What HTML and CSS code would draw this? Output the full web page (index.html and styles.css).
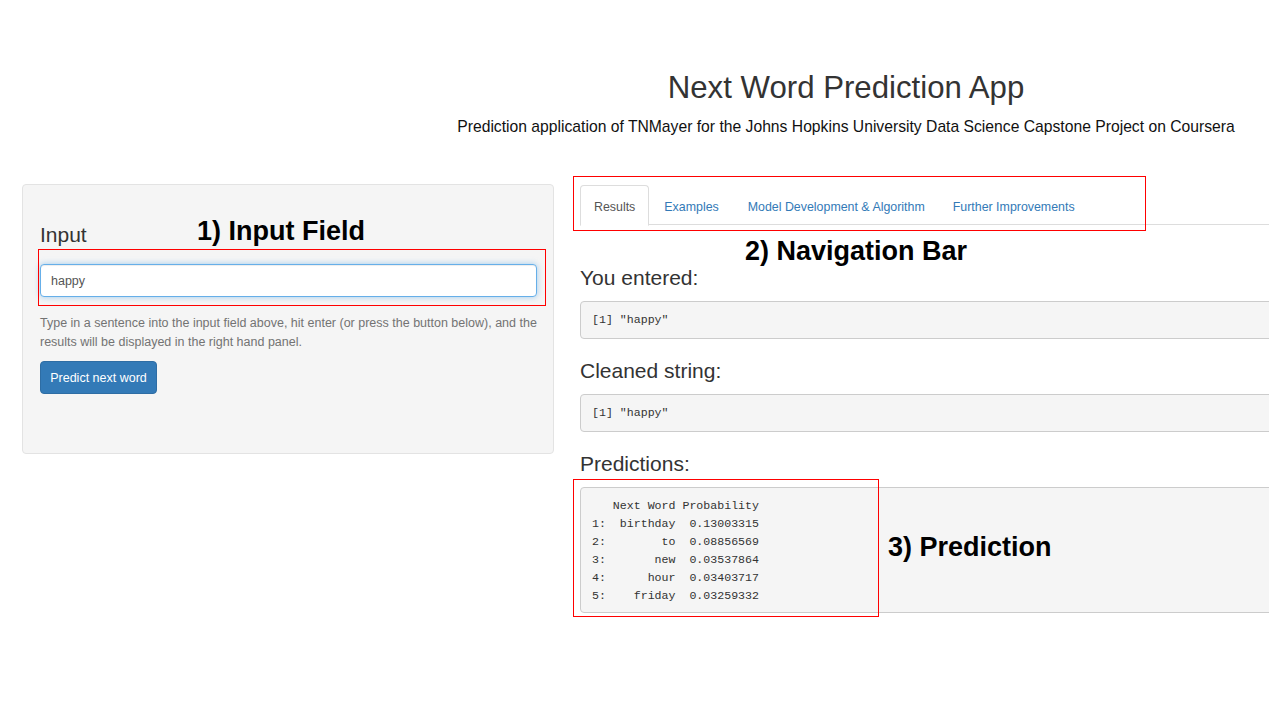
FILE: index.html
```html
<!DOCTYPE html>
<html>
<head>
<meta charset="utf-8">
<link rel="stylesheet" href="styles.css">
</head>
<body>
<div class="slide">
  <header class="header">
    <h1 class="title">Next Word Prediction App</h1>
    <p class="subtitle">Prediction application of TNMayer for the Johns Hopkins University Data Science Capstone Project on Coursera</p>
  </header>
  <div class="app">
    <aside class="sidebar">
      <label class="input-label" for="txt">Input</label>
      <input id="txt" class="text-input" type="text" value="happy">
      <p class="help">Type in a sentence into the input field above, hit enter (or press the button below), and the results will be displayed in the right hand panel.</p>
      <button class="btn">Predict next word</button>
    </aside>
    <main class="main">
      <ul class="tabs">
        <li class="tab active">Results</li>
        <li class="tab">Examples</li>
        <li class="tab">Model Development &amp; Algorithm</li>
        <li class="tab">Further Improvements</li>
      </ul>
      <h4 class="out-title">You entered:</h4>
      <pre class="out">[1] "happy"</pre>
      <h4 class="out-title">Cleaned string:</h4>
      <pre class="out">[1] "happy"</pre>
      <h4 class="out-title">Predictions:</h4>
      <pre class="out out-table">   Next Word Probability
1:  birthday  0.13003315
2:        to  0.08856569
3:       new  0.03537864
4:      hour  0.03403717
5:    friday  0.03259332</pre>
    </main>
  </div>
  <div class="note note-box box1"></div>
  <div class="note note-box box2"></div>
  <div class="note note-box box3"></div>
  <div class="note note-label label1">1) Input Field</div>
  <div class="note note-label label2">2) Navigation Bar</div>
  <div class="note note-label label3">3) Prediction</div>
</div>
</body>
</html>
```
FILE: styles.css
```css
html, body {
  margin: 0;
  padding: 0;
  background: #fff;
}
body {
  font-family: "Liberation Sans", Arial, sans-serif;
  color: #333;
  width: 1280px;
  height: 720px;
  overflow: hidden;
}
.slide {
  position: relative;
  width: 1280px;
  height: 720px;
  overflow: hidden;
}
.header {
  margin-left: 412px;
  padding-top: 68px;
  text-align: center;
}
.title {
  margin: 0;
  font-weight: 400;
  font-size: 31.2px;
  line-height: 40px;
  color: #333;
}
.subtitle {
  margin: 10px 0 0;
  font-size: 15.7px;
  line-height: 18px;
  color: #111;
}
.app {
  display: flex;
  align-items: flex-start;
  margin-top: 48px;
  padding-left: 22px;
  gap: 26px;
}
.sidebar {
  box-sizing: border-box;
  width: 532px;
  height: 270px;
  flex: none;
  background: #f5f5f5;
  border: 1px solid #e3e3e3;
  border-radius: 4px;
  padding: 38px 16px 0 17px;
  display: flex;
  flex-direction: column;
  align-items: flex-start;
}
.input-label {
  font-size: 21px;
  line-height: 24px;
  color: #333;
}
.text-input {
  box-sizing: border-box;
  margin-top: 17px;
  width: 497px;
  height: 33px;
  border: 1px solid #66afe9;
  border-radius: 4px;
  box-shadow: inset 0 1px 1px rgba(0,0,0,.075), 0 0 6px rgba(102,175,233,.6);
  padding: 0 10px;
  font-family: "Liberation Sans", Arial, sans-serif;
  font-size: 12.5px;
  color: #555;
  outline: none;
  background: #fff;
}
.help {
  margin: 17px 0 0;
  font-size: 12.5px;
  line-height: 19px;
  color: #737373;
  width: 500px;
}
.btn {
  margin-top: 9px;
  box-sizing: border-box;
  width: 117px;
  height: 33px;
  background: #337ab7;
  border: 1px solid #2e6da4;
  border-radius: 4px;
  color: #fff;
  font-family: "Liberation Sans", Arial, sans-serif;
  font-size: 12.5px;
  padding: 0;
}
.main {
  flex: none;
  width: 689px;
  overflow: hidden;
  padding-top: 1px;
}
.tabs {
  list-style: none;
  margin: 0;
  padding: 0;
  display: flex;
  border-bottom: 1px solid #ddd;
  height: 40px;
  box-sizing: border-box;
}
.tab {
  box-sizing: border-box;
  height: 41px;
  padding: 14px 13px 0;
  margin-right: 1px;
  font-size: 12.4px;
  color: #337ab7;
  border: 1px solid transparent;
  border-radius: 4px 4px 0 0;
  white-space: nowrap;
}
.tab.active {
  color: #555;
  background: #fff;
  border-color: #ddd #ddd transparent;
}
.tab:last-child {
  margin-left: -1px;
}
.out-title {
  margin: 41px 0 11px;
  font-weight: 400;
  font-size: 21px;
  line-height: 24px;
  color: #333;
}
.out + .out-title {
  margin-top: 20px;
}
.out {
  margin: 0;
  box-sizing: border-box;
  width: 720px;
  background: #f5f5f5;
  border: 1px solid #ccc;
  border-radius: 4px;
  padding: 9px 11px;
  font-family: "Liberation Mono", "Courier New", monospace;
  font-size: 11.6px;
  line-height: 18px;
  color: #333;
  min-height: 38px;
}
.out-table {
  padding: 9px 11px 7px;
}
.note {
  position: absolute;
}
.note-box {
  border: 1.5px solid #f00;
  box-sizing: border-box;
}
.box1 { left: 38px; top: 249px; width: 508px; height: 57px; }
.box2 { left: 573px; top: 176px; width: 573px; height: 55px; }
.box3 { left: 573px; top: 479px; width: 306px; height: 138px; }
.note-label {
  font-family: "Liberation Sans", Arial, sans-serif;
  font-weight: 700;
  font-size: 27px;
  line-height: 30px;
  color: #000;
  white-space: nowrap;
}
.label1 { left: 197px; top: 216px; }
.label2 { left: 745px; top: 236px; }
.label3 { left: 888px; top: 532px; }
```
